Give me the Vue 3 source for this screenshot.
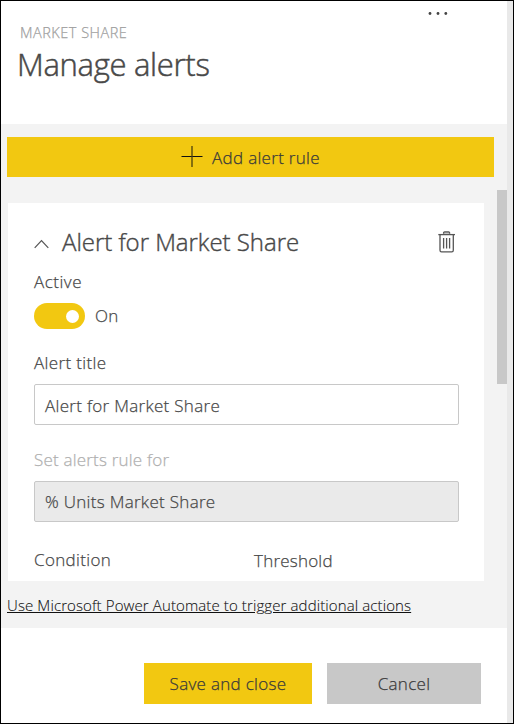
<script setup>
import { ref } from 'vue'

const active = ref(true)
const title = ref('Alert for Market Share')
const measure = ref('% Units Market Share')
</script>

<template>
  <div class="frame">
    <main class="pane">
      <header class="head">
        <div class="head-text">
          <div class="eyebrow"><span>MARKET SHARE</span></div>
          <h1><span>Manage alerts</span></h1>
        </div>
        <svg class="more" width="22" height="6" viewBox="0 0 22 6">
          <circle cx="3" cy="3.5" r="1.4" /><circle cx="11" cy="3.5" r="1.4" /><circle cx="18.8" cy="3.5" r="1.4" />
        </svg>
      </header>

      <section class="body">
        <button class="add">
          <svg width="22" height="22" viewBox="0 0 22 22">
            <path d="M0.5 10.5H21.5" stroke="#111" /><path d="M11 0V21" stroke="#4a400d" stroke-width="1.3" />
          </svg>
          <span class="t-add">Add alert rule</span>
        </button>

        <div class="scroll">
          <div class="card">
            <div class="card-head">
              <svg class="chev" width="16" height="10" viewBox="0 0 16 10"><path d="M0.7 8.8L7.5 1.6L14.3 8.8" /></svg>
              <h2><span>Alert for Market Share</span></h2>
              <svg class="trash" width="18" height="22" viewBox="0 0 18 22">
                <path d="M5.6 2.8V1.8Q5.6 0.9 6.6 0.9H10.6Q11.6 0.9 11.6 1.8V2.8" fill="#bbb" />
                <path d="M0.3 3.6H17" stroke-width="1.3" />
                <path d="M2 4V19.2Q2 20.8 3.5 20.8H13.8Q15.3 20.8 15.3 19.2V4" />
                <path d="M5.6 7V17.4M8.6 7V17.4M11.6 7V17.4" stroke-width="1.3" />
              </svg>
            </div>
            <div class="label l-active"><span>Active</span></div>
            <div class="toggle-row">
              <div class="toggle" :class="{ on: active }"><i></i></div>
              <span class="t-on">{{ active ? 'On' : 'Off' }}</span>
            </div>
            <div class="label l-title"><span>Alert title</span></div>
            <div class="field"><span class="t-f1">{{ title }}</span></div>
            <div class="label l-set"><span>Set alerts rule for</span></div>
            <div class="field disabled"><span class="t-f2">{{ measure }}</span></div>
            <div class="cols">
              <div class="label l-cond"><span>Condition</span></div>
              <div class="label l-thr"><span>Threshold</span></div>
            </div>
          </div>
          <div class="thumb"></div>
        </div>

        <a class="link">Use Microsoft Power Automate to trigger additional actions</a>
      </section>

      <footer class="foot">
        <button class="save"><span>Save and close</span></button>
        <button class="cancel"><span>Cancel</span></button>
      </footer>
    </main>
    <div class="gutter"></div>
  </div>
</template>

<style>
body { margin: 0; background: #fff; }
</style>

<style scoped>
* { box-sizing: border-box; }
.frame {
  width: 514px; height: 724px; display: flex; border: 1px solid #000; background: #fff;
  font-family: "Open Sans", "Noto Sans", sans-serif; font-weight: 300; font-size: 17px;
  line-height: 24px; color: #484848; white-space: nowrap; overflow: hidden;
  letter-spacing: 0.3px; -webkit-text-stroke: 0.25px currentColor;
}
.pane { width: 506px; display: flex; flex-direction: column; }
.gutter { width: 6px; background: #e9e9e9; }
.head { height: 123px; display: flex; justify-content: space-between; padding: 9px 58px 0 16px; }
.eyebrow { margin-top: 13px; padding-left: 3px; height: 20px; line-height: 20px; font-size: 14.5px; color: #a0a0a0; letter-spacing: 0.5px; }
h1 { margin: 1px 0 0; height: 40px; line-height: 40px; font-size: 31px; font-weight: 300; color: #484848; letter-spacing: -0.3px; -webkit-text-stroke-width: 0.5px; }
.more { fill: #444; }
.body { height: 504px; background: #f3f3f3; padding: 13px 0 0 6px; display: flex; flex-direction: column; }
button { border: 0; padding: 0; font: inherit; letter-spacing: 0.3px; color: #3a3a3a; display: flex; align-items: center; justify-content: center; }
.add { width: 487px; height: 40px; background: #f2c811; gap: 9px; }
.t-add { padding-top: 2px; }
.scroll { display: flex; justify-content: space-between; height: 404px; padding-left: 1px; }
.card { width: 476px; height: 378px; margin-top: 26px; padding: 0 25px 0 26px; background: #fff; overflow: hidden; }
.thumb { width: 10px; height: 194px; margin-top: 13px; background: #c8c8c8; }
.card-head { display: flex; height: 67px; padding-top: 24px; }
.chev { margin-top: 12px; fill: none; stroke: #555; stroke-width: 1.2; }
h2 { margin: -1px 0 0 12px; height: 32px; line-height: 32px; font-size: 24px; font-weight: 300; color: #484848; flex: 1; letter-spacing: -0.03px; -webkit-text-stroke-width: 0.4px; }
.trash { margin: 4px 3px 0 0; fill: none; stroke: #555; stroke-width: 1.3; }
.label { height: 24px; line-height: 24px; }
.l-active { letter-spacing: 0.5px; }
.toggle-row { display: flex; align-items: center; gap: 10px; height: 26px; margin-top: 9px; }
.toggle { width: 51px; height: 26px; border-radius: 13px; background: #c8c8c8; display: flex; align-items: center; padding: 0 6px; }
.toggle.on { background: #f2c811; justify-content: flex-end; }
.toggle i { width: 13px; height: 13px; border-radius: 50%; background: #fff; }
.l-title { margin-top: 22px; letter-spacing: 0.35px; }
.field { height: 41px; margin-top: 9px; border: 1px solid #c8c8c8; border-radius: 2px; padding-left: 10px; line-height: 41px; }
.l-set { margin-top: 23px; color: #b0b0b0; letter-spacing: 0.2px; }
.field.disabled { margin-top: 9px; background: #eaeaea; line-height: 39px; }
.cols { display: flex; margin-top: 26px; }
.l-cond { width: 220px; letter-spacing: 0.35px; }
.l-thr { margin-top: 1px; letter-spacing: 0.22px; }
.link { height: 24px; margin-top: 12px; line-height: 24px; font-size: 15px; color: #111; text-decoration: underline; letter-spacing: 0.11px; -webkit-text-stroke-width: 0.1px; }
.foot { flex: 1; display: flex; gap: 15px; padding: 35px 0 0 143px; }
.foot button { height: 41px; }
.save { width: 168px; background: #f2c811; }
.cancel { width: 154px; background: #c8c8c8; }
</style>
